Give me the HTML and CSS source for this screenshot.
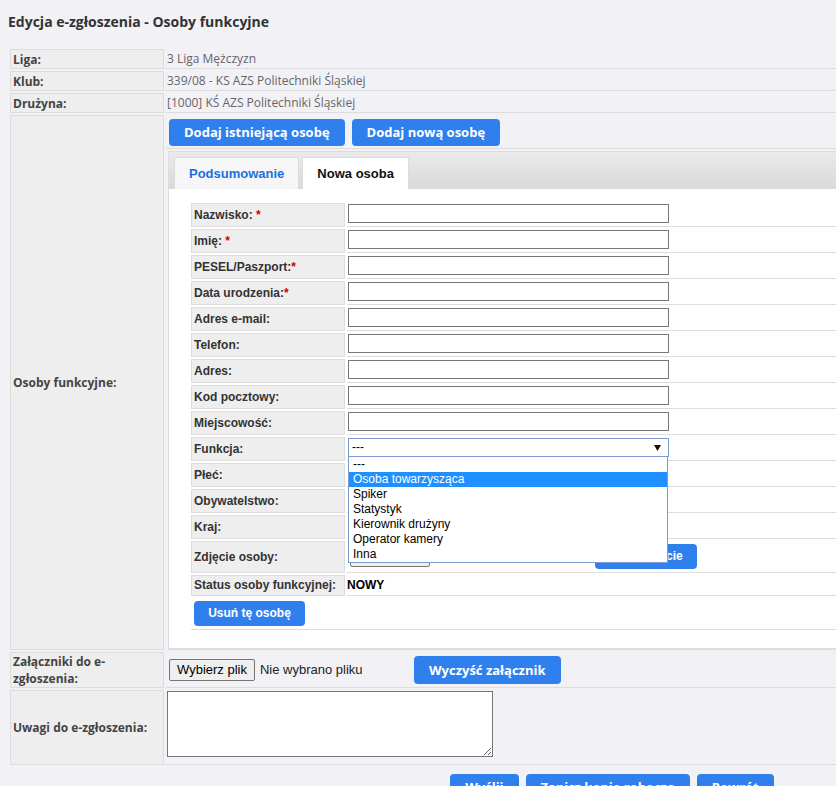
FILE: index.html
```html
<!DOCTYPE html>
<html lang="pl">
<head>
<meta charset="utf-8">
<title>Edycja e-zgłoszenia - Osoby funkcyjne</title>
<link rel="stylesheet" href="styles.css">
</head>
<body>
<div class="page">
  <h1 class="title">Edycja e-zgłoszenia - Osoby funkcyjne</h1>
  <div class="sheet">
    <div class="lbl">Liga:</div>
    <div class="val">3 Liga Mężczyzn</div>
    <div class="lbl">Klub:</div>
    <div class="val">339/08 - KS AZS Politechniki Śląskiej</div>
    <div class="lbl">Drużyna:</div>
    <div class="val">[1000] KŚ AZS Politechniki Śląskiej</div>

    <div class="lbl">Osoby funkcyjne:</div>
    <div class="val val-persons">
      <div class="actions">
        <button type="button" class="btn">Dodaj istniejącą osobę</button>
        <button type="button" class="btn">Dodaj nową osobę</button>
      </div>
      <div class="panel">
        <div class="tabs">
          <span class="tab">Podsumowanie</span>
          <span class="tab tab-active">Nowa osoba</span>
        </div>
        <div class="panel-body">
          <div class="form">
            <div class="flbl">Nazwisko:&nbsp;<span class="req">*</span></div>
            <div class="fval"><input class="inp" type="text"></div>
            <div class="flbl">Imię:&nbsp;<span class="req">*</span></div>
            <div class="fval"><input class="inp" type="text"></div>
            <div class="flbl">PESEL/Paszport:<span class="req">*</span></div>
            <div class="fval"><input class="inp" type="text"></div>
            <div class="flbl">Data urodzenia:<span class="req">*</span></div>
            <div class="fval"><input class="inp" type="text"></div>
            <div class="flbl">Adres e-mail:</div>
            <div class="fval"><input class="inp" type="text"></div>
            <div class="flbl">Telefon:</div>
            <div class="fval"><input class="inp" type="text"></div>
            <div class="flbl">Adres:</div>
            <div class="fval"><input class="inp" type="text"></div>
            <div class="flbl">Kod pocztowy:</div>
            <div class="fval"><input class="inp" type="text"></div>
            <div class="flbl">Miejscowość:</div>
            <div class="fval"><input class="inp" type="text"></div>

            <div class="flbl">Funkcja:</div>
            <div class="fval">
              <div class="sel sel-open">
                <span>---</span>
                <svg class="arrow" width="7" height="6" viewBox="0 0 7 6"><polygon points="0,0 7,0 3.5,6" fill="#111"/></svg>
                <ul class="dropdown">
                  <li>---</li>
                  <li class="hl">Osoba towarzysząca</li>
                  <li>Spiker</li>
                  <li>Statystyk</li>
                  <li>Kierownik drużyny</li>
                  <li>Operator kamery</li>
                  <li>Inna</li>
                </ul>
              </div>
            </div>
            <div class="flbl">Płeć:</div>
            <div class="fval"><div class="sel sel-hidden"></div></div>
            <div class="flbl">Obywatelstwo:</div>
            <div class="fval"><div class="sel sel-hidden"></div></div>
            <div class="flbl">Kraj:</div>
            <div class="fval"><div class="sel sel-hidden"></div></div>

            <div class="flbl flbl-tall">Zdjęcie osoby:</div>
            <div class="fval fval-photo">
              <div class="file file-small">
                <span class="filebtn filebtn-blank"></span>
              </div>
              <button type="button" class="btn btn-arial btn-photo">Usuń zdjęcie</button>
            </div>

            <div class="flbl flbl-short">Status osoby funkcyjnej:</div>
            <div class="fval fval-status">NOWY</div>

            <div class="frow-btn">
              <button type="button" class="btn btn-arial btn-remove">Usuń tę osobę</button>
            </div>
          </div>
        </div>
      </div>
    </div>

    <div class="lbl">Załączniki do e-zgłoszenia:</div>
    <div class="val val-attach">
      <div class="file">
        <button type="button" class="filebtn">Wybierz plik</button>
        <span class="filetxt">Nie wybrano pliku</span>
      </div>
      <button type="button" class="btn btn-tall">Wyczyść załącznik</button>
    </div>

    <div class="lbl">Uwagi do e-zgłoszenia:</div>
    <div class="val val-notes"><textarea class="notes"></textarea></div>
  </div>

  <div class="footer">
    <button type="button" class="btn">Wyślij</button>
    <button type="button" class="btn">Zapisz kopię roboczą</button>
    <button type="button" class="btn">Powrót</button>
  </div>
</div>
</body>
</html>
```

FILE: styles.css
```css
* { box-sizing: border-box; }

html, body {
  margin: 0;
  overflow: hidden;
  background: #f1f1f6;
}

body {
  font-family: "Open Sans", "Liberation Sans", sans-serif;
  color: #333;
}

.page {
  padding: 12px 0 0 8px;
  width: 1240px;
}

.title {
  margin: 0 0 18px;
  font-size: 14px;
  font-weight: 700;
  line-height: 19px;
  color: #333;
}

.sheet {
  margin-left: 2px;
  width: 1206px;
  display: grid;
  grid-template-columns: 154px 1fr;
  gap: 2px;
}

.lbl {
  background: #eeeeee;
  border: 1px solid #dcdcdc;
  padding: 0 2px;
  font-size: 12px;
  font-weight: 700;
  line-height: 17px;
  color: #444;
  display: flex;
  align-items: center;
}

.val {
  border-bottom: 1px solid #dcdcdc;
  padding-left: 1px;
  font-size: 12px;
  line-height: 19px;
  color: #666;
}

.btn {
  height: 27px;
  padding: 0 15px;
  border: none;
  border-radius: 4px;
  background: #2f80ed;
  color: #fff;
  font-family: "Open Sans", "Liberation Sans", sans-serif;
  font-size: 13px;
  font-weight: 700;
  line-height: 27px;
  white-space: nowrap;
  cursor: pointer;
}

.btn-arial {
  font-family: "Liberation Sans", Arial, sans-serif;
  font-size: 12px;
  height: 25px;
  line-height: 25px;
  padding: 0 14px;
}

.btn-tall { height: 28px; line-height: 28px; }

/* Osoby funkcyjne */
.val-persons {
  padding: 4px 0 0 0;
  border-bottom: none;
}

.actions {
  display: flex;
  gap: 7px;
  padding: 0 0 2px 3px;
  border-bottom: 1px solid #dddddd;
}

.panel {
  margin: 2px 0 0 2px;
  border: 1px solid #dddddd;
  border-bottom-width: 2px;
  background: #fff;
}

.tabs {
  height: 37px;
  padding: 5px 0 0 5px;
  background: linear-gradient(#eaeaea, #d9d9d9);
  display: flex;
  align-items: flex-end;
  gap: 3px;
}

.tab {
  height: 32px;
  padding: 0 14px;
  border: 1px solid #dcdcdc;
  border-bottom: none;
  background: #f6f6f6;
  font-family: "Liberation Sans", Arial, sans-serif;
  font-size: 13px;
  font-weight: 700;
  line-height: 31px;
  color: #1a6fdf;
}

.tab-active {
  background: #fff;
  color: #111;
}

.panel-body {
  padding: 14px 0 18px 22px;
}

.form {
  display: grid;
  grid-template-columns: 154px 1fr;
  gap: 2px;
  font-family: "Liberation Sans", Arial, sans-serif;
  font-size: 12px;
}

.flbl {
  min-height: 24px;
  background: #eeeeee;
  border: 1px solid #dddddd;
  padding: 0 2px;
  font-weight: 700;
  color: #333;
  display: flex;
  align-items: center;
  white-space: nowrap;
}

.flbl-tall { min-height: 32px; }
.flbl-short { min-height: 20px; }

.req { color: #d40000; font-weight: 700; }

.fval {
  min-height: 24px;
  border-bottom: 1px solid #dddddd;
  padding: 1px 0 0 1px;
}

.inp {
  display: block;
  width: 321px;
  height: 19px;
  margin: 0;
  padding: 0 3px;
  border: 1px solid #767676;
  background: #fff;
  font: 12px "Liberation Sans", Arial, sans-serif;
  outline: none;
}

.sel {
  position: relative;
  width: 321px;
  height: 19px;
  border: 1px solid #a9a9a9;
  background: #fff;
  padding-left: 3px;
  display: flex;
  align-items: center;
  color: #000;
  font-size: 12px;
}

.sel-hidden { width: 300px; }

.sel-open {
  border-color: #7a9cd3;
  z-index: 5;
}

.arrow {
  position: absolute;
  right: 7px;
  top: 6px;
}

.dropdown {
  position: absolute;
  top: calc(100% + 1px);
  left: -1px;
  width: 320px;
  margin: 0;
  padding: 0;
  list-style: none;
  background: #fff;
  border: 1px solid #7a9cd3;
  border-top: none;
  z-index: 10;
}

.dropdown li {
  height: 15px;
  padding-left: 4px;
  line-height: 15px;
  font-size: 12px;
  color: #000;
  white-space: nowrap;
}

.dropdown li.hl {
  background: #1e90ff;
  color: #fff;
}

.fval-photo {
  display: flex;
  align-items: center;
  padding: 0 0 0 1px;
}

.file {
  width: 245px;
  display: flex;
  align-items: center;
  flex-shrink: 0;
}

.file-small { margin-left: 2px; }

.filebtn {
  height: 22px;
  padding: 0 7px;
  margin: 0;
  border: 1px solid #767676;
  border-radius: 2px;
  background: #efefef;
  color: #000;
  font: 13px "Liberation Sans", Arial, sans-serif;
  line-height: 20px;
  white-space: nowrap;
}

.filebtn-blank {
  display: block;
  width: 80px;
  height: 21px;
}

.filetxt {
  margin-left: 5px;
  font: 13px "Liberation Sans", Arial, sans-serif;
  color: #222;
  white-space: nowrap;
}

.btn-photo { width: 102px; padding: 0; }

.fval-status {
  min-height: 20px;
  padding: 0;
  display: flex;
  align-items: center;
  font-weight: 700;
  color: #000;
}

.frow-btn {
  grid-column: 1 / -1;
  padding: 3px 0 3px 3px;
  border-bottom: 1px solid #dddddd;
}

.btn-remove { width: 111px; padding: 0; }

/* Załączniki */
.val-attach {
  display: flex;
  align-items: center;
  padding-left: 3px;
}

/* Uwagi */
.val-notes {
  padding: 1px 0 7px 1px;
}

.notes {
  display: block;
  width: 326px;
  height: 66px;
  margin: 0;
  border: 1px solid #767676;
  background: #fff;
}

.footer {
  width: 1208px;
  margin-top: 9px;
  display: flex;
  justify-content: center;
  gap: 7px;
}
```
